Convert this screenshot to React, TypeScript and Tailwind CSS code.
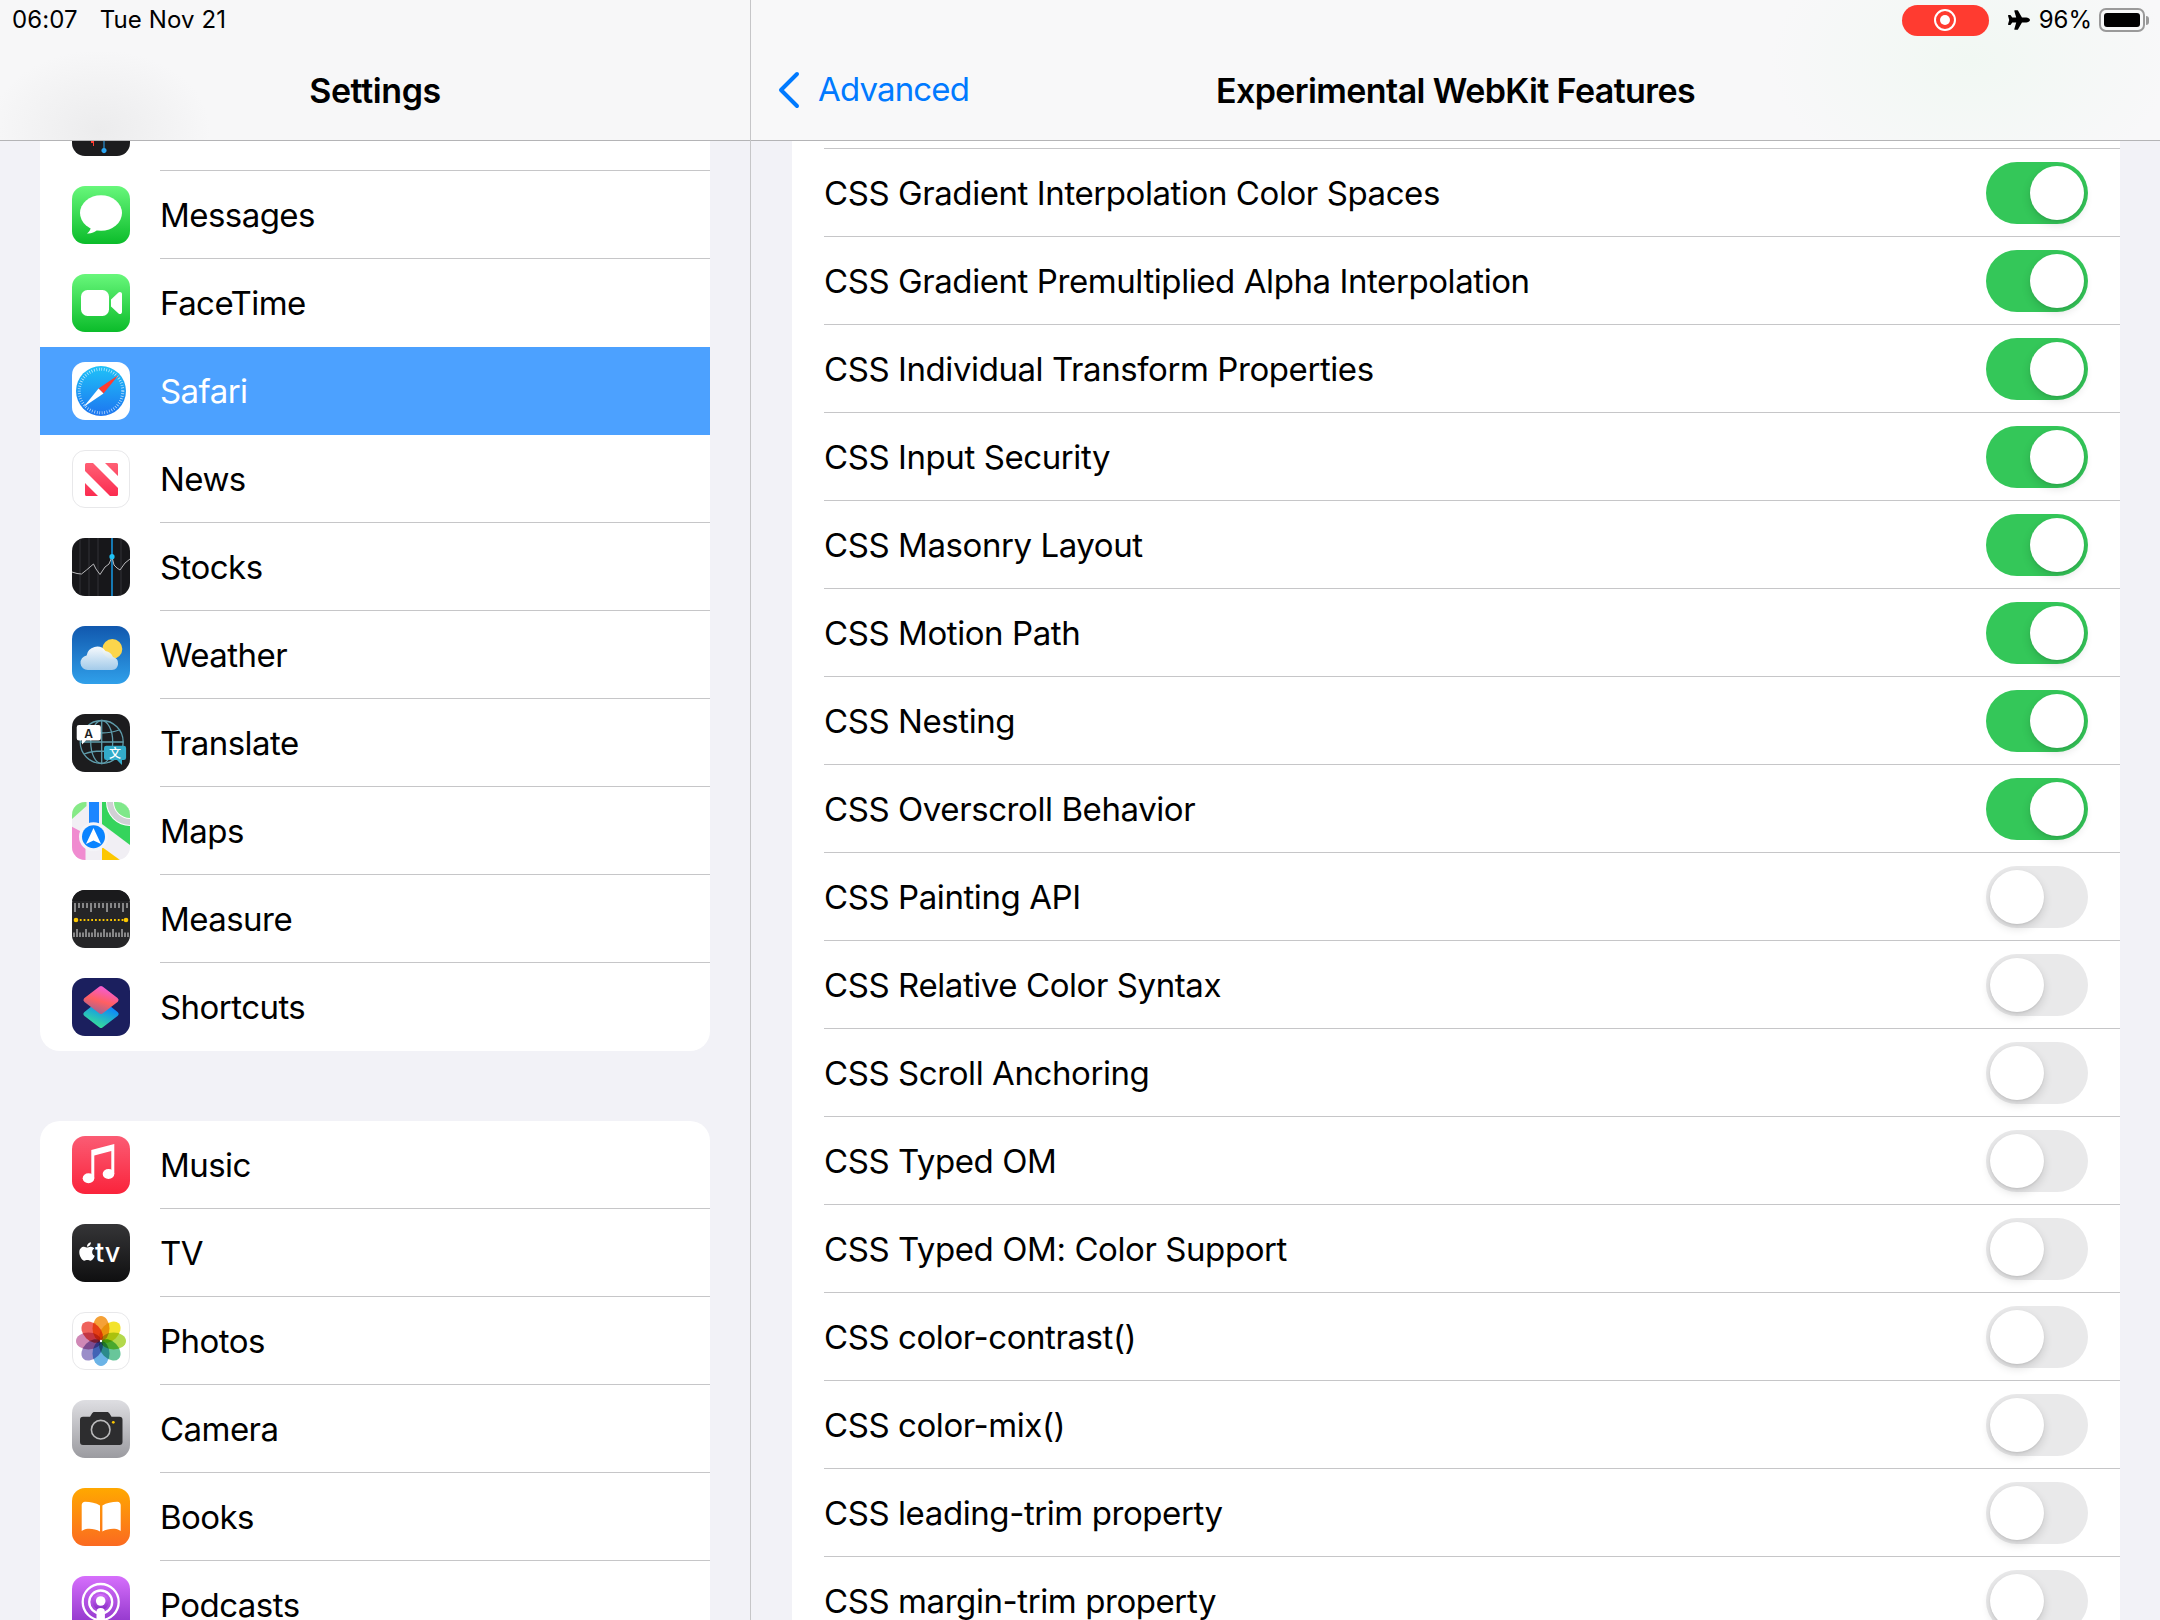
import React from "react";
import { FaApple, FaPlane } from "react-icons/fa";

const Frame = ({ children, border }: { children: React.ReactNode; border?: boolean }) => (
  <svg viewBox="0 0 58 58" className="w-[58px] h-[58px] shrink-0">
    <defs>
      <clipPath id="squircle">
        <rect width="58" height="58" rx="13" />
      </clipPath>
    </defs>
    <g clipPath="url(#squircle)">{children}</g>
    {border && <rect x="0.5" y="0.5" width="57" height="57" rx="12.5" fill="none" stroke="#e8e8ea" />}
  </svg>
);

const VoiceIcon = () => (
  <Frame>
    <rect width="58" height="58" fill="#1c1c1e" />
    <path d="M19 43h3v5h-1v-3h-2z" fill="#ff3b30" />
    <path d="M31.5 43h1v7a2.6 2.6 0 1 1-1 0z" fill="#2aa5f2" />
  </Frame>
);

const MessagesIcon = () => (
  <Frame>
    <defs>
      <linearGradient id="greenApp" x1="0" y1="0" x2="0" y2="1">
        <stop offset="0" stopColor="#68f77b" />
        <stop offset="1" stopColor="#0bbc2a" />
      </linearGradient>
    </defs>
    <rect width="58" height="58" fill="url(#greenApp)" />
    <ellipse cx="29" cy="27" rx="21" ry="17.8" fill="#fff" />
    <path d="M19 40c0 3-1.500 6-4 7.500 3.500.5 7.500-1 10-3.500z" fill="#fff" />
  </Frame>
);

const FaceTimeIcon = () => (
  <Frame>
    <rect width="58" height="58" fill="url(#greenApp)" />
    <rect x="9" y="16" width="28" height="26" rx="6.500" fill="#fff" />
    <path d="M39 25.500 46.500 18.500c1.300-1.200 3.500-.3 3.500 1.500v18c0 1.800-2.200 2.700-3.500 1.500L39 32.500z" fill="#fff" />
  </Frame>
);

const SafariIcon = () => (
  <Frame>
    <defs>
      <linearGradient id="safariBlue" x1="0" y1="0" x2="0" y2="1">
        <stop offset="0" stopColor="#1fc2f8" />
        <stop offset="1" stopColor="#1d75f0" />
      </linearGradient>
    </defs>
    <rect width="58" height="58" fill="#fff" />
    <circle cx="29" cy="29" r="25" fill="url(#safariBlue)" />
    <circle cx="29" cy="29" r="21.800" fill="none" stroke="#fff" strokeOpacity="0.75" strokeWidth="3" strokeDasharray="0.7 1.800" />
    <path d="M46.500 13 26.500 26.500 31.500 31.500z" fill="#ff3b30" />
    <path d="M11.500 45 26.500 26.500 31.500 31.500z" fill="#fff" />
  </Frame>
);

const NewsIcon = () => (
  <Frame border>
    <defs>
      <linearGradient id="newsRed" x1="0" y1="0" x2="0" y2="1">
        <stop offset="0" stopColor="#ff5f74" />
        <stop offset="1" stopColor="#fb2c50" />
      </linearGradient>
    </defs>
    <rect width="58" height="58" fill="#fff" />
    <path
      d="M14.500 13H21L46 38v6.500a1.500 1.500 0 0 1-1.500 1.500H38L13 21v-6.500a1.500 1.500 0 0 1 1.500-1.500zM33 13h11.500a1.500 1.500 0 0 1 1.500 1.500V26zM13 33l13 13H14.500a1.500 1.500 0 0 1-1.500-1.500z"
      fill="url(#newsRed)"
    />
  </Frame>
);

const StocksIcon = () => (
  <Frame>
    <rect width="58" height="58" fill="#17171a" />
    <path d="M8 0v58M17 0v58M26 0v58M49 0v58" stroke="#2a2a2e" strokeWidth="1.500" />
    <path d="M40 0v58" stroke="#1684c4" strokeWidth="1.800" />
    <path
      d="M0 34 5 35.500 9.500 36 14.500 32 21.500 26 24 31 28 36.500 33 29 37 26 40 19 42 27 45 30 48 32 53 25 58 21"
      fill="none"
      stroke="#b9b9bb"
      strokeWidth="1"
    />
    <circle cx="40" cy="18.700" r="2.600" fill="#1fc3f5" />
  </Frame>
);

const WeatherIcon = () => (
  <Frame>
    <defs>
      <linearGradient id="weatherSky" x1="0" y1="0" x2="0" y2="1">
        <stop offset="0" stopColor="#1158ae" />
        <stop offset="1" stopColor="#30a0ea" />
      </linearGradient>
      <linearGradient id="weatherCloud" x1="0" y1="0" x2="0" y2="1">
        <stop offset="0" stopColor="#ffffff" />
        <stop offset="1" stopColor="#a8cdea" />
      </linearGradient>
    </defs>
    <rect width="58" height="58" fill="url(#weatherSky)" />
    <circle cx="40.300" cy="23" r="10" fill="#fbd54b" />
    <path
      d="M16 44A7.300 7.300 0 0 1 14.600 29.500 10.500 10.500 0 0 1 33.500 25 9.500 9.500 0 0 1 41 31 6.600 6.600 0 0 1 40 44z"
      fill="url(#weatherCloud)"
      fillOpacity="0.96"
    />
  </Frame>
);

const TranslateIcon = () => (
  <Frame>
    <rect width="58" height="58" fill="#1c1c1e" />
    <g fill="none" stroke="#5e9cab" strokeWidth="1.300">
      <circle cx="29.700" cy="28" r="21.500" />
      <ellipse cx="29.700" cy="28" rx="11" ry="21.500" />
      <path d="M29.700 6.500v43M8.200 28h43M12 16c10 4 25 4 35 0M12 40c10-4 25-4 35 0" />
    </g>
    <path d="M7 11h19.500a2.300 2.300 0 0 1 2.300 2.300v11a2.300 2.300 0 0 1-2.300 2.300H14l-4 4v-4H7a2.300 2.300 0 0 1-2.300-2.300v-11A2.300 2.300 0 0 1 7 11z" fill="#fff" />
    <path d="M34.300 31.700h17.500a2.300 2.300 0 0 1 2.300 2.300v9.800a2.300 2.300 0 0 1-2.300 2.300h-1.800v5l-5-5H34.300a2.300 2.300 0 0 1-2.300-2.300V34a2.300 2.300 0 0 1 2.300-2.300z" fill="#33abc9" />
    <text x="16.700" y="24" textAnchor="middle" fontSize="12" fontWeight="600" fill="#1c1c1e" fontFamily="Inter, sans-serif">
      A
    </text>
    <text x="43" y="44" textAnchor="middle" fontSize="12" fontWeight="500" fill="#fff" fontFamily="'Noto Sans CJK SC', sans-serif">
      文
    </text>
  </Frame>
);

const MapsIcon = () => (
  <Frame>
    <rect width="58" height="58" fill="#f1eff4" />
    <path d="M3 0H14.500V4L0 17V4z" fill="#86ea87" />
    <path d="M30 0H58V43L30 22z" fill="#35d45c" />
    <circle cx="58" cy="0" r="24" fill="#fff" />
    <circle cx="58" cy="0" r="23" fill="#d0d0d4" />
    <circle cx="58" cy="0" r="17" fill="#fff" />
    <circle cx="58" cy="0" r="16" fill="#7fe88a" />
    <path d="M0 24.700 13.500 32V58H0z" fill="#f08bd0" />
    <path d="M30 45 48 58H30z" fill="#fcc700" />
    <path d="M17 0H27V24H17z" fill="#1c86ff" />
    <circle cx="21.500" cy="34.700" r="14.500" fill="#f4f4f8" />
    <circle cx="21.500" cy="34.700" r="11.500" fill="#0a84ff" />
    <path d="M21.500 26 29 42 21.500 38.500 14 42z" fill="#fff" />
  </Frame>
);

const topTicks = [3, 7, 11, 15, 19, 23, 27, 31, 35, 39, 43, 47, 51, 55];
const bottomTicks = Array.from({ length: 19 }, (_, i) => 2 + i * 3);

const MeasureIcon = () => (
  <Frame>
    <rect width="58" height="58" fill="#252527" />
    <rect width="58" height="11" fill="#1a1a1c" />
    {topTicks.map((x, i) => (
      <path key={x} d={`M${x} 13v${i % 4 === 0 ? 9 : 5}`} stroke="#fff" strokeWidth="0.9" />
    ))}
    <path d="M4 30H54" stroke="#fcc700" strokeWidth="1.800" strokeDasharray="1.800 2" />
    <circle cx="4" cy="30" r="2.300" fill="#fcc700" />
    <circle cx="54" cy="30" r="2.300" fill="#fcc700" />
    {bottomTicks.map((x, i) => (
      <path key={x} d={`M${x} 47v-${i % 3 === 1 ? 8 : 4.5}`} stroke="#fff" strokeWidth="0.9" />
    ))}
  </Frame>
);

const ShortcutsIcon = () => (
  <Frame>
    <defs>
      <linearGradient id="shortcutTop" x1="0.7" y1="0" x2="0.3" y2="1">
        <stop offset="0" stopColor="#f55cd0" />
        <stop offset="0.55" stopColor="#ff5f62" />
        <stop offset="1" stopColor="#a8638f" />
      </linearGradient>
      <linearGradient id="shortcutBottom" x1="0.8" y1="0.2" x2="0.4" y2="1">
        <stop offset="0" stopColor="#0a84ff" />
        <stop offset="1" stopColor="#34d8a0" />
      </linearGradient>
    </defs>
    <rect width="58" height="58" fill="#1b1f5e" />
    <path d="M29 24 44 36 29 47.500 14 36z" fill="url(#shortcutBottom)" stroke="url(#shortcutBottom)" strokeWidth="5" strokeLinejoin="round" />
    <path d="M29 10.500 44 22 29 33.500 14 22z" fill="url(#shortcutTop)" stroke="url(#shortcutTop)" strokeWidth="5" strokeLinejoin="round" />
  </Frame>
);

const MusicIcon = () => (
  <Frame>
    <defs>
      <linearGradient id="musicRed" x1="0" y1="0" x2="0" y2="1">
        <stop offset="0" stopColor="#fb5c74" />
        <stop offset="1" stopColor="#fa233b" />
      </linearGradient>
    </defs>
    <rect width="58" height="58" fill="url(#musicRed)" />
    <path d="M19.300 14 42.300 8v30h-3V15l-17 4.500V42h-3z" fill="#fff" />
    <ellipse cx="16.500" cy="42.300" rx="5.800" ry="5" fill="#fff" />
    <ellipse cx="36.500" cy="38" rx="5.800" ry="5" fill="#fff" />
  </Frame>
);

const TvIcon = () => (
  <Frame>
    <defs>
      <linearGradient id="tvDark" x1="0" y1="0" x2="0" y2="1">
        <stop offset="0" stopColor="#353537" />
        <stop offset="1" stopColor="#0f0f10" />
      </linearGradient>
    </defs>
    <rect width="58" height="58" fill="url(#tvDark)" />
    <FaApple x="4.500" y="17" size={21} color="#fff" />
    <text x="23" y="37.800" fontSize="27" fontWeight="500" fill="#fff" fontFamily="Inter, sans-serif">
      tv
    </text>
  </Frame>
);

const petals = [
  { angle: 0, color: "#f5a137" },
  { angle: 45, color: "#f3e32c" },
  { angle: 90, color: "#b3d94c" },
  { angle: 135, color: "#68c69a" },
  { angle: 180, color: "#6bb3e6" },
  { angle: 225, color: "#9a8dc9" },
  { angle: 270, color: "#d088b6" },
  { angle: 315, color: "#ef625c" },
];

const PhotosIcon = () => (
  <Frame border>
    <rect width="58" height="58" fill="#fff" />
    {petals.map((p) => (
      <ellipse
        key={p.angle}
        cx="29"
        cy="16.500"
        rx="8.500"
        ry="12.500"
        fill={p.color}
        transform={`rotate(${p.angle} 29 29)`}
        className="mix-blend-multiply"
      />
    ))}
    <circle cx="29" cy="29" r="1.200" fill="#fff" />
  </Frame>
);

const CameraIcon = () => (
  <Frame>
    <defs>
      <linearGradient id="cameraGrey" x1="0" y1="0" x2="0" y2="1">
        <stop offset="0" stopColor="#dedee2" />
        <stop offset="1" stopColor="#9b9ba0" />
      </linearGradient>
    </defs>
    <rect width="58" height="58" fill="url(#cameraGrey)" />
    <path d="M11 16.700h7l2-3.200c.5-.9 1.300-1.500 2.500-1.500h12.500c1.200 0 2 .6 2.500 1.500l2 3.200h8a3 3 0 0 1 3 3V42a3 3 0 0 1-3 3H11a3 3 0 0 1-3-3V19.700a3 3 0 0 1 3-3z" fill="#2d2d2f" />
    <circle cx="28.700" cy="29.700" r="9.300" fill="none" stroke="#b9b9bb" strokeWidth="1.600" />
    <circle cx="41.300" cy="22.300" r="1.400" fill="#fcc700" />
  </Frame>
);

const BooksIcon = () => (
  <Frame>
    <defs>
      <linearGradient id="booksOrange" x1="0" y1="0" x2="0" y2="1">
        <stop offset="0" stopColor="#ffa800" />
        <stop offset="1" stopColor="#fb6a21" />
      </linearGradient>
    </defs>
    <rect width="58" height="58" fill="url(#booksOrange)" />
    <path d="M9.700 17c0-2 1.500-3.300 3.300-3.300 5.500 0 11 1.200 15 3.800V43.500c-4-2.300-9.500-3.300-14-2.500-2.200.4-4.300 2-4.300 2z" fill="#fff" />
    <path d="M48.700 17c0-2-1.500-3.300-3.300-3.300-5.500 0-11 1.200-15 3.800V43.500c4-2.300 9.500-3.300 14-2.500 2.200.4 4.300 2 4.300 2z" fill="#fff" />
  </Frame>
);

const PodcastsIcon = () => (
  <Frame>
    <defs>
      <linearGradient id="podcastPurple" x1="0" y1="0" x2="0" y2="1">
        <stop offset="0" stopColor="#d66ffc" />
        <stop offset="1" stopColor="#832bc1" />
      </linearGradient>
    </defs>
    <rect width="58" height="58" fill="url(#podcastPurple)" />
    <circle cx="28.700" cy="26" r="18" fill="none" stroke="#fff" strokeWidth="2.300" />
    <circle cx="28.700" cy="26" r="11.500" fill="none" stroke="#fff" strokeWidth="2.300" />
    <circle cx="28.700" cy="26" r="8" fill="url(#podcastPurple)" />
    <circle cx="28.700" cy="25" r="4.800" fill="#fff" />
    <rect x="24.500" y="32" width="8.400" height="20" rx="4" fill="#fff" />
  </Frame>
);

type SidebarItem = { label: string; icon: React.ReactNode; selected?: boolean; last?: boolean };

const groupOne: SidebarItem[] = [
  { label: "", icon: <VoiceIcon /> },
  { label: "Messages", icon: <MessagesIcon /> },
  { label: "FaceTime", icon: <FaceTimeIcon />, last: true },
  { label: "Safari", icon: <SafariIcon />, selected: true, last: true },
  { label: "News", icon: <NewsIcon /> },
  { label: "Stocks", icon: <StocksIcon /> },
  { label: "Weather", icon: <WeatherIcon /> },
  { label: "Translate", icon: <TranslateIcon /> },
  { label: "Maps", icon: <MapsIcon /> },
  { label: "Measure", icon: <MeasureIcon /> },
  { label: "Shortcuts", icon: <ShortcutsIcon />, last: true },
];

const groupTwo: SidebarItem[] = [
  { label: "Music", icon: <MusicIcon /> },
  { label: "TV", icon: <TvIcon /> },
  { label: "Photos", icon: <PhotosIcon /> },
  { label: "Camera", icon: <CameraIcon /> },
  { label: "Books", icon: <BooksIcon /> },
  { label: "Podcasts", icon: <PodcastsIcon /> },
];

const features: [string, boolean][] = [
  ["CSS Gradient Interpolation Color Spaces", true],
  ["CSS Gradient Premultiplied Alpha Interpolation", true],
  ["CSS Individual Transform Properties", true],
  ["CSS Input Security", true],
  ["CSS Masonry Layout", true],
  ["CSS Motion Path", true],
  ["CSS Nesting", true],
  ["CSS Overscroll Behavior", true],
  ["CSS Painting API", false],
  ["CSS Relative Color Syntax", false],
  ["CSS Scroll Anchoring", false],
  ["CSS Typed OM", false],
  ["CSS Typed OM: Color Support", false],
  ["CSS color-contrast()", false],
  ["CSS color-mix()", false],
  ["CSS leading-trim property", false],
  ["CSS margin-trim property", false],
];

const SidebarRow = ({ item }: { item: SidebarItem }) => (
  <div className={`flex items-center h-[88px] pl-[32px] shrink-0 ${item.selected ? "bg-[#4ca1ff] text-white" : "text-black"}`}>
    {item.icon}
    <div className={`flex items-center flex-1 h-full ml-[30px] ${item.last ? "" : "border-b border-[#c6c6c8]"}`}>
      <span className="pt-[2px] text-[33px] tracking-[-0.55px]">{item.label}</span>
    </div>
  </div>
);

const Toggle = ({ on }: { on: boolean }) => (
  <div className={`flex w-[102px] h-[62px] rounded-full p-[4px] ${on ? "justify-end bg-[#34c759]" : "justify-start bg-[#e9e9ea]"}`}>
    <div className="w-[54px] h-[54px] rounded-full bg-white shadow-[0_4px_10px_rgba(0,0,0,0.14),0_1px_2px_rgba(0,0,0,0.08)]" />
  </div>
);

export default function App() {
  return (
    <div className="flex w-[2160px] h-[1620px] overflow-hidden bg-[#f2f2f7] font-['Inter',sans-serif] text-black">
      <div className="flex flex-col w-[751px] h-full border-r border-[#c6c6c8] shrink-0">
        <header className="flex flex-col h-[141px] shrink-0 border-b border-[#b4b4b6] bg-[radial-gradient(ellipse_110px_80px_at_100px_130px,#ececed,#f7f7f8_100%)] z-10">
          <div className="flex items-center h-[40px] pl-[12px] gap-[22px] text-[24px] tracking-[0.1px]">
            <span>06:07</span>
            <span>Tue Nov 21</span>
          </div>
          <div className="flex flex-1 items-center justify-center">
            <span className="text-[34px] font-semibold tracking-[-0.4px]">Settings</span>
          </div>
        </header>
        <div className="flex-1 overflow-hidden px-[40px]">
          <div className="flex flex-col -mt-[58px] rounded-b-[20px] overflow-hidden bg-white">
            {groupOne.map((item, i) => (
              <SidebarRow key={i} item={item} />
            ))}
          </div>
          <div className="flex flex-col mt-[70px] rounded-t-[20px] overflow-hidden bg-white">
            {groupTwo.map((item) => (
              <SidebarRow key={item.label} item={item} />
            ))}
          </div>
        </div>
      </div>
      <div className="flex flex-col flex-1 h-full min-w-0">
        <header className="flex flex-col h-[141px] shrink-0 border-b border-[#b4b4b6] bg-[radial-gradient(ellipse_200px_130px_at_1220px_60px,#f1f8f3,#f8f8f9_100%)]">
          <div className="flex items-center justify-end h-[40px] pr-[11px]">
            <div className="flex items-center justify-center w-[87px] h-[31px] mr-[19px] rounded-full bg-[#ff3b30]">
              <div className="flex items-center justify-center w-[22px] h-[22px] rounded-full border-2 border-white">
                <div className="w-[10px] h-[10px] rounded-full bg-white" />
              </div>
            </div>
            <FaPlane className="w-[22px] h-[22px] mr-[9px]" />
            <span className="text-[24px] mr-[7px]">96%</span>
            <div className="flex items-center">
              <div className="flex w-[46px] h-[24px] p-[3px] rounded-[7px] border-2 border-[#9a9a9a]">
                <div className="flex-1 rounded-[3px] bg-black" />
              </div>
              <div className="w-[3px] h-[9px] ml-[1px] rounded-r-full bg-[#9a9a9a]" />
            </div>
          </div>
          <div className="grid grid-cols-[1fr_auto_1fr] flex-1 items-center">
            <div className="flex items-center pl-[27px] text-[#007aff]">
              <svg viewBox="0 0 22 38" className="w-[22px] h-[38px]" fill="none" stroke="currentColor" strokeWidth="4" strokeLinecap="round" strokeLinejoin="round">
                <path d="M19 3 3 19l16 16" />
              </svg>
              <span className="ml-[18px] text-[33px] tracking-[-0.85px]">Advanced</span>
            </div>
            <span className="text-[34px] font-semibold tracking-[-0.6px]">Experimental WebKit Features</span>
          </div>
        </header>
        <div className="flex-1 overflow-hidden pl-[41px] pr-[40px]">
          <div className="bg-white pl-[32px]">
            <div className="h-[8px] border-b border-[#c6c6c8]" />
            {features.map(([name, on]) => (
              <div key={name} className="flex items-center justify-between h-[88px] pr-[32px] border-b border-[#c6c6c8]">
                <span className="pt-[3px] text-[33px] tracking-[-0.42px]">{name}</span>
                <Toggle on={on} />
              </div>
            ))}
          </div>
        </div>
      </div>
    </div>
  );
}
